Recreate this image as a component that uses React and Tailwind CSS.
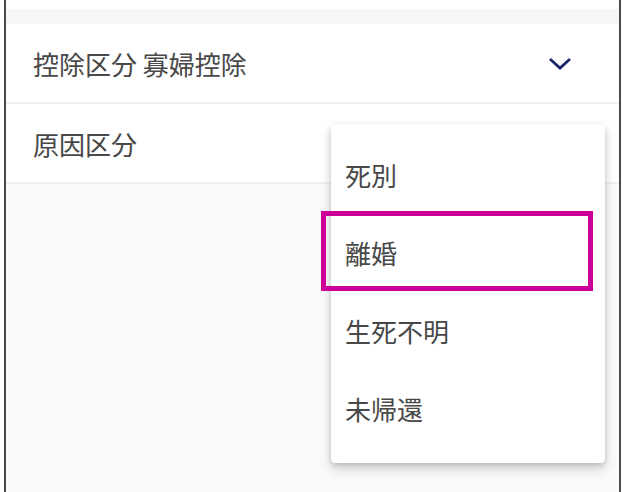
export default function App() {
  const font = { fontFamily: '"Noto Sans CJK JP", "Noto Sans", sans-serif' };
  const items = ["死別", "離婚", "生死不明", "未帰還"];
  return (
    <div className="relative w-[626px] h-[492px] bg-white overflow-hidden" style={font}>
      <div className="ml-[4px] w-[617px] h-full border-x-2 border-[#4a4a4a] bg-[#fafafa] flex flex-col">
        <div className="h-[9px] bg-white" />
        <div className="h-[15px] bg-[#f6f6f6]" />
        <div className="h-[80px] bg-white border-b-2 border-[#f0f0f0] flex items-center justify-between pl-[27px] pr-[46px]">
          <span className="text-[26px] text-[#484848] leading-none pt-[2px]">控除区分 寡婦控除</span>
          <svg width="26" height="16" viewBox="0 0 26 16" className="mt-[1px]">
            <path d="M3 3 L13 12 L23 3" fill="none" stroke="#1c2566" strokeWidth="2.8" />
          </svg>
        </div>
        <div className="h-[80px] bg-white border-b-2 border-[#f0f0f0] flex items-center pl-[27px]">
          <span className="text-[26px] text-[#484848] leading-none pt-[2px]">原因区分</span>
        </div>
      </div>
      <div className="absolute left-[331px] top-[124px] w-[274px] h-[339px] bg-white rounded-[4px] shadow-[0_6px_12px_rgba(0,0,0,0.18),0_2px_5px_rgba(0,0,0,0.12)] pt-[12px]">
        {items.map((t) => (
          <div key={t} className="h-[78px] flex items-center pl-[14px]">
            <span className="text-[26px] text-[#484848] leading-none">{t}</span>
          </div>
        ))}
      </div>
      <div className="absolute left-[321px] top-[211px] w-[272px] h-[80px] border-[5px] border-[#cc0099]" />
    </div>
  );
}
